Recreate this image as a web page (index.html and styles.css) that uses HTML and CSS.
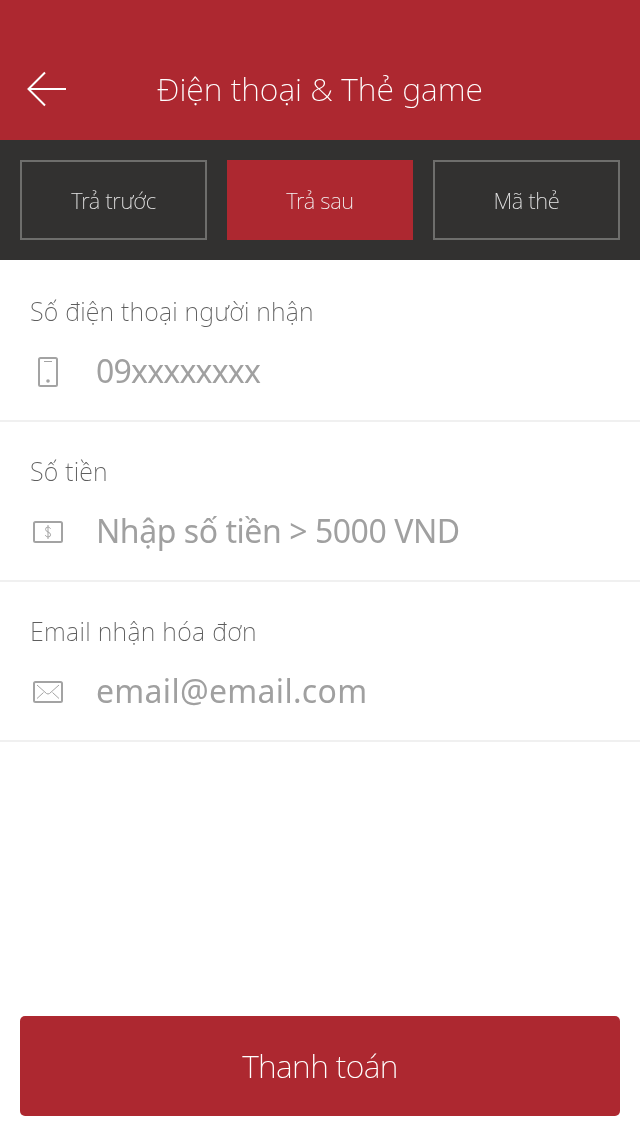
FILE: index.html
```html
<!DOCTYPE html>
<html lang="vi">
<head>
<meta charset="utf-8">
<title>Điện thoại &amp; Thẻ game</title>
<link rel="stylesheet" href="styles.css">
</head>
<body>
<div class="app">
  <header class="header">
    <svg class="back" width="40" height="36" viewBox="0 0 40 36" fill="none" stroke="#fff" stroke-width="2"><path d="M39 18H2M18 1.500 1.500 18 18 34.500"/></svg>
    <h1 class="title">Điện thoại &amp; Thẻ game</h1>
  </header>
  <nav class="tabs">
    <div class="tab">Trả trước</div>
    <div class="tab tab-active">Trả sau</div>
    <div class="tab">Mã thẻ</div>
  </nav>
  <section class="field">
    <div class="label">Số điện thoại người nhận</div>
    <div class="input-row">
      <span class="icon-box icon-phone"><svg width="20" height="30" viewBox="0 0 20 30" fill="none" stroke="#a3a3a3" stroke-width="2"><rect x="1" y="1" width="18" height="28" rx="1.5"/><path d="M6 4.500h8" stroke-width="1"/><circle cx="10" cy="24" r="1.800" fill="#a3a3a3" stroke="none"/></svg></span>
      <span class="value value-phone">09xxxxxxxx</span>
    </div>
  </section>
  <section class="field">
    <div class="label">Số tiền</div>
    <div class="input-row">
      <span class="icon-box"><svg width="30" height="22" viewBox="0 0 30 22" fill="none" stroke="#a3a3a3" stroke-width="2"><rect x="1" y="1" width="28" height="20" rx="1.5"/><path d="M17.500 7.800q-.8-1.800-2.500-1.800-2.400 0-2.400 2.300 0 1.800 2.400 2.700 2.600.9 2.600 2.800 0 2.200-2.600 2.200-1.900 0-2.700-1.900M15 4v14" stroke-width="1"/></svg></span>
      <span class="value value-amount">Nhập số tiền &gt; 5000 VND</span>
    </div>
  </section>
  <section class="field">
    <div class="label label-email">Email nhận hóa đơn</div>
    <div class="input-row">
      <span class="icon-box"><svg width="30" height="22" viewBox="0 0 30 22" fill="none" stroke="#a3a3a3" stroke-width="2"><rect x="1" y="1" width="28" height="20" rx="1.5"/><path d="M4 4l9.500 8.500q1.500 1 3 0L26 4M4 17.500l6.500-6M26 17.500l-6.500-6" stroke-width="1"/></svg></span>
      <span class="value value-email">email@email.com</span>
    </div>
  </section>
  <div class="spacer"></div>
  <button class="pay"><span class="pay-text">Thanh toán</span></button>
</div>
</body>
</html>
```
FILE: styles.css
```css
* { box-sizing: border-box; }
html, body { margin: 0; padding: 0; background: #fff; }
body { font-family: "Noto Sans", "Open Sans", sans-serif; font-weight: 200; }
.app { width: 640px; height: 1136px; display: flex; flex-direction: column; overflow: hidden; will-change: transform; }
.header { height: 140px; flex: none; background: #ad2830; position: relative; display: flex; align-items: center; justify-content: center; padding: 36px 0 0; }
.back { position: absolute; left: 27px; top: 71px; }
.title { margin: 0; font-size: 32px; font-weight: 200; color: #fff; letter-spacing: 0; }
.tabs { height: 120px; flex: none; background: #323130; display: grid; grid-template-columns: 187px 186px 187px; gap: 20px; padding: 20px; }
.tab { border: 2px solid #6e6e6c; color: #e6e6e6; font-size: 22px; font-weight: 200; display: flex; align-items: center; justify-content: center; letter-spacing: -0.3px; }
.tab-active { background: #ad2830; border-color: #ad2830; color: #f4f4f4; }
.field { height: 160px; flex: none; box-shadow: 0 2px 0 #f0f0f0; padding: 33px 0 0 30px; }
.label { font-size: 25px; font-weight: 200; line-height: 36px; color: #5e5e5e; letter-spacing: 0.2px; }
.label-email { letter-spacing: 0.3px; }
.input-row { display: flex; align-items: center; height: 60px; margin-top: 13px; }
.icon-box { width: 66px; flex: none; display: flex; align-items: center; padding-left: 3px; }
.icon-box svg { display: block; }
.icon-phone { padding-left: 8px; }
.value { font-size: 32px; color: #a0a0a0; font-weight: 400; white-space: nowrap; padding-bottom: 4px; }
.value-phone { letter-spacing: -0.8px; }
.value-amount { letter-spacing: -0.45px; }
.value-email { letter-spacing: 0.3px; }
.spacer { flex: 1; }
.pay { flex: none; height: 100px; margin: 0 20px 20px; border: 0; border-radius: 5px; background: #ad2830; color: #fff; font-family: inherit; font-weight: 200; font-size: 32px; letter-spacing: -0.6px; padding: 0 0 2px; }
```
